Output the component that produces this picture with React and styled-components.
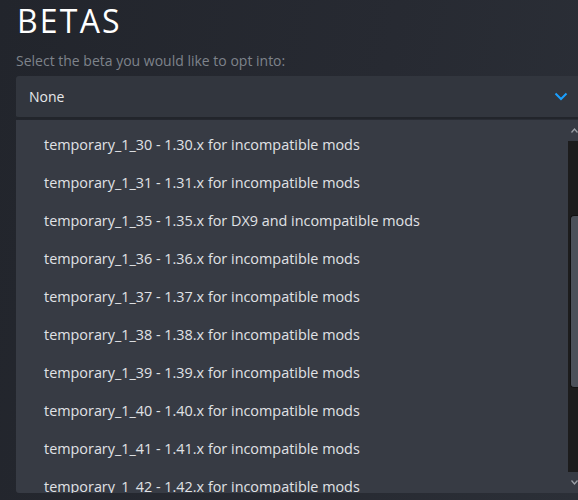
import React from 'react';
import styled, { createGlobalStyle } from 'styled-components';

const Global = createGlobalStyle`
  html, body {
    margin: 0;
    padding: 0;
    height: 100%;
    overflow: hidden;
    background: linear-gradient(100deg, #22252c 0%, #272a32 60%, #2b2f37 100%);
    font-family: "Open Sans", "Noto Sans", sans-serif;
  }
`;

const Page = styled.div`
  padding: 0 0 0 16px;
  width: 578px;
  box-sizing: border-box;
`;

const Title = styled.h1`
  margin: 0;
  padding: 1px 0 0 1px;
  font-size: 32px;
  line-height: 40px;
  font-weight: 400;
  letter-spacing: 2.2px;
  color: #ffffff;
`;

const Subtitle = styled.div`
  margin-top: 10px;
  font-size: 14px;
  line-height: 20px;
  color: #7e838b;
`;

const Select = styled.div`
  margin-top: 5px;
  height: 41px;
  display: flex;
  align-items: center;
  justify-content: space-between;
  padding: 0 10px 0 13px;
  background: #32363e;
  border-radius: 3px 0 0 3px;
  border-bottom: 2px solid #22252b;
  color: #e6e8ea;
  font-size: 14px;
`;

const Menu = styled.div`
  margin-top: 1px;
  height: 373px;
  display: flex;
  background: #373b44;
  border-radius: 0 0 0 3px;
`;

const Items = styled.div`
  flex: 1;
  padding-top: 5px;
  overflow: hidden;
`;

const Item = styled.div`
  height: 38px;
  display: flex;
  align-items: center;
  padding-left: 28px;
  font-size: 14.4px;
  color: #e0e2e6;
  white-space: nowrap;
`;

const Scroll = styled.div`
  width: 10px;
  display: flex;
  flex-direction: column;
`;

const Arrow = styled.div`
  height: 21px;
  display: flex;
  align-items: center;
  justify-content: flex-end;
  background: #373b44;
`;

const Track = styled.div`
  flex: 1;
  background: #1c1c1d;
  padding-top: 74px;
`;

const Thumb = styled.div`
  margin-left: 2px;
  height: 171px;
  background: #4c515a;
  border: 1px solid #111;
  border-right: none;
  border-radius: 4px 0 0 4px;
`;

const betas = [
  'temporary_1_30 - 1.30.x for incompatible mods',
  'temporary_1_31 - 1.31.x for incompatible mods',
  'temporary_1_35 - 1.35.x for DX9 and incompatible mods',
  'temporary_1_36 - 1.36.x for incompatible mods',
  'temporary_1_37 - 1.37.x for incompatible mods',
  'temporary_1_38 - 1.38.x for incompatible mods',
  'temporary_1_39 - 1.39.x for incompatible mods',
  'temporary_1_40 - 1.40.x for incompatible mods',
  'temporary_1_41 - 1.41.x for incompatible mods',
  'temporary_1_42 - 1.42.x for incompatible mods',
];

const App = () => (
  <Page>
    <Global />
    <Title>BETAS</Title>
    <Subtitle>Select the beta you would like to opt into:</Subtitle>
    <Select>
      <span>None</span>
      <svg width="14" height="9" viewBox="0 0 14 9">
        <path d="M1.5 1.5 L7 7 L12.5 1.5" fill="none" stroke="#1a9fff" strokeWidth="2" />
      </svg>
    </Select>
    <Menu>
      <Items>
        {betas.map(b => <Item key={b}>{b}</Item>)}
      </Items>
      <Scroll>
        <Arrow>
          <svg width="7" height="5" viewBox="0 0 7 5">
            <path d="M0.5 4.5 L3.5 1 L6.5 4.5" fill="none" stroke="#9a9ea5" strokeWidth="1.3" />
          </svg>
        </Arrow>
        <Track><Thumb /></Track>
        <Arrow>
          <svg width="7" height="5" viewBox="0 0 7 5">
            <path d="M0.5 0.5 L3.5 4 L6.5 0.5" fill="none" stroke="#9a9ea5" strokeWidth="1.3" />
          </svg>
        </Arrow>
      </Scroll>
    </Menu>
  </Page>
);

export default App;
